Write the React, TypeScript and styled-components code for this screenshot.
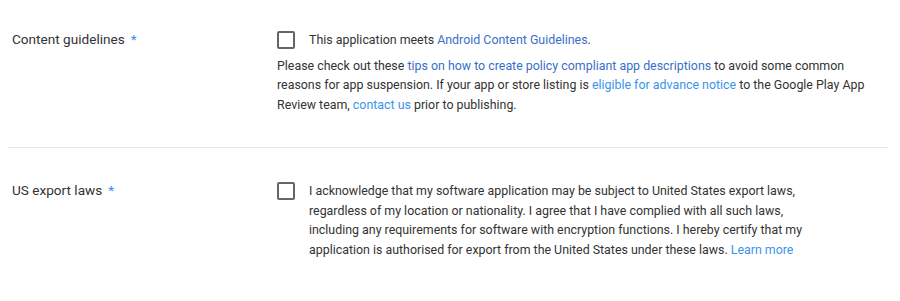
import React from 'react'
import styled, { createGlobalStyle } from 'styled-components'

const GlobalStyle = createGlobalStyle`
  body {
    margin: 0;
    background: #fff;
    font-family: Roboto, 'Noto Sans', sans-serif;
    color: #333;
  }
`

const Page = styled.div`
  padding: 0 12px 0 8px;
`

const Section = styled.section<{ $last?: boolean }>`
  display: grid;
  grid-template-columns: 265px 1fr;
  padding: ${(p) => (p.$last ? '33px 0 20px 4px' : '30px 0 33px 4px')};
  border-bottom: ${(p) => (p.$last ? 'none' : '1px solid #e8e8e8')};
`

const Label = styled.div`
  font-size: 13.6px;
  line-height: 19.5px;
  color: #333;
`

const Required = styled.span`
  color: #3b8eea;
  margin-left: 6px;
`

const Field = styled.div`
  display: flex;
  flex-direction: column;
  gap: 6px;
`

const CheckRow = styled.label`
  display: flex;
  align-items: flex-start;
  gap: 14px;
`

const Box = styled.span`
  flex: none;
  width: 14px;
  height: 14px;
  margin-top: 1px;
  border: 2px solid #666;
  border-radius: 2px;
`

const Text = styled.p<{ $width?: string }>`
  margin: 0;
  font-size: 12.4px;
  line-height: 19.5px;
  color: #333;
  max-width: ${(p) => p.$width || 'none'};
`

const Link = styled.a<{ $light?: boolean }>`
  color: ${(p) => (p.$light ? '#3b93ea' : '#3a6fc8')};
  text-decoration: none;
`

export default function App() {
  return (
    <Page>
      <GlobalStyle />
      <Section>
        <Label>
          Content guidelines<Required>*</Required>
        </Label>
        <Field>
          <CheckRow>
            <Box />
            <Text>
              This application meets <Link href="#">Android Content Guidelines</Link>.
            </Text>
          </CheckRow>
          <Text $width="600px">
            Please check out these{' '}
            <Link href="#">tips on how to create policy compliant app descriptions</Link> to avoid
            some common reasons for app suspension. If your app or store listing is{' '}
            <Link href="#" $light>
              eligible for advance notice
            </Link>{' '}
            to the Google Play App Review team,{' '}
            <Link href="#" $light>
              contact us
            </Link>{' '}
            prior to publishing.
          </Text>
        </Field>
      </Section>
      <Section $last>
        <Label>
          US export laws<Required>*</Required>
        </Label>
        <Field>
          <CheckRow>
            <Box />
            <Text $width="510px">
              I acknowledge that my software application may be subject to United States export
              laws, regardless of my location or nationality. I agree that I have complied with all
              such laws, including any requirements for software with encryption functions. I hereby
              certify that my application is authorised for export from the United States under
              these laws.{' '}
              <Link href="#" $light>
                Learn more
              </Link>
            </Text>
          </CheckRow>
        </Field>
      </Section>
    </Page>
  )
}
